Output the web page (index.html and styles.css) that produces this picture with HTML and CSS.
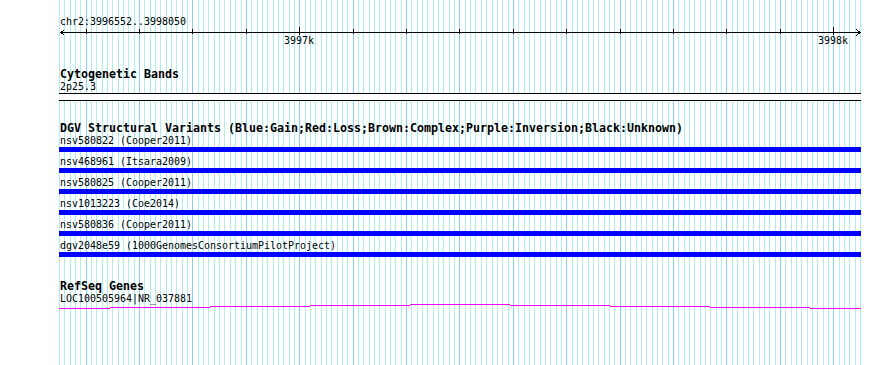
FILE: index.html
```html
<!DOCTYPE html>
<html>
<head>
<meta charset="utf-8">
<title>chr2:3996552..3998050</title>
<link rel="stylesheet" href="styles.css">
</head>
<body>
<div class="panel">
  <svg class="grid" width="890" height="365" viewBox="0 0 890 365" aria-hidden="true">
    <path class="grid-minor" d="M59.5 0V365M64.5 0V365M70.5 0V365M75.5 0V365M80.5 0V365M91.5 0V365M96.5 0V365M102.5 0V365M107.5 0V365M112.5 0V365M118.5 0V365M123.5 0V365M128.5 0V365M134.5 0V365M144.5 0V365M150.5 0V365M155.5 0V365M160.5 0V365M166.5 0V365M171.5 0V365M176.5 0V365M182.5 0V365M187.5 0V365M198.5 0V365M203.5 0V365M208.5 0V365M214.5 0V365M219.5 0V365M224.5 0V365M230.5 0V365M235.5 0V365M241.5 0V365M251.5 0V365M257.5 0V365M262.5 0V365M267.5 0V365M273.5 0V365M278.5 0V365M283.5 0V365M289.5 0V365M294.5 0V365M305.5 0V365M310.5 0V365M315.5 0V365M321.5 0V365M326.5 0V365M331.5 0V365M337.5 0V365M342.5 0V365M347.5 0V365M358.5 0V365M363.5 0V365M369.5 0V365M374.5 0V365M379.5 0V365M385.5 0V365M390.5 0V365M395.5 0V365M401.5 0V365M411.5 0V365M417.5 0V365M422.5 0V365M427.5 0V365M433.5 0V365M438.5 0V365M443.5 0V365M449.5 0V365M454.5 0V365M465.5 0V365M470.5 0V365M475.5 0V365M481.5 0V365M486.5 0V365M492.5 0V365M497.5 0V365M502.5 0V365M508.5 0V365M518.5 0V365M524.5 0V365M529.5 0V365M534.5 0V365M540.5 0V365M545.5 0V365M550.5 0V365M556.5 0V365M561.5 0V365M572.5 0V365M577.5 0V365M582.5 0V365M588.5 0V365M593.5 0V365M598.5 0V365M604.5 0V365M609.5 0V365M614.5 0V365M625.5 0V365M630.5 0V365M636.5 0V365M641.5 0V365M646.5 0V365M652.5 0V365M657.5 0V365M662.5 0V365M668.5 0V365M678.5 0V365M684.5 0V365M689.5 0V365M694.5 0V365M700.5 0V365M705.5 0V365M710.5 0V365M716.5 0V365M721.5 0V365M732.5 0V365M737.5 0V365M743.5 0V365M748.5 0V365M753.5 0V365M759.5 0V365M764.5 0V365M769.5 0V365M775.5 0V365M785.5 0V365M791.5 0V365M796.5 0V365M801.5 0V365M807.5 0V365M812.5 0V365M817.5 0V365M823.5 0V365M828.5 0V365M839.5 0V365M844.5 0V365M849.5 0V365M855.5 0V365M860.5 0V365"/>
    <path class="grid-major" d="M86.5 0V365M139.5 0V365M192.5 0V365M246.5 0V365M299.5 0V365M353.5 0V365M406.5 0V365M459.5 0V365M513.5 0V365M566.5 0V365M620.5 0V365M673.5 0V365M726.5 0V365M780.5 0V365M833.5 0V365"/>
  </svg>

  <div class="tracks">
    <div class="small ruler-label">chr2:3996552..3998050</div>
    <svg class="ruler" width="890" height="40" viewBox="0 0 890 40">
      <path class="ruler-line" d="M60 5.5H860.5"/>
      <path class="ruler-line" d="M64.5 2.5L61 5.5L64.5 8.5"/>
      <path class="ruler-line" d="M856.5 2.5L860 5.5L856.5 8.5"/>
      <path class="ruler-line" d="M86.5 2V7M139.5 2V7M192.5 2V7M246.5 2V7M353.5 2V7M406.5 2V7M459.5 2V7M513.5 2V7M566.5 2V7M620.5 2V7M673.5 2V7M726.5 2V7M780.5 2V7"/>
      <path class="ruler-line" d="M299.5 0V8M833.5 0V8"/>
      <text class="tick-label" x="299" y="17">3997k</text>
      <text class="tick-label" x="833" y="17">3998k</text>
    </svg>

    <section class="track track-cyto">
      <div class="track-title">Cytogenetic Bands</div>
      <div class="small">2p25.3</div>
      <div class="band"></div>
    </section>

    <section class="track track-dgv">
      <div class="track-title">DGV Structural Variants (Blue:Gain;Red:Loss;Brown:Complex;Purple:Inversion;Black:Unknown)</div>
      <div class="feature">
        <div class="small">nsv580822 (Cooper2011)</div>
        <div class="bar bar-gain"></div>
      </div>
      <div class="feature">
        <div class="small">nsv468961 (Itsara2009)</div>
        <div class="bar bar-gain"></div>
      </div>
      <div class="feature">
        <div class="small">nsv580825 (Cooper2011)</div>
        <div class="bar bar-gain"></div>
      </div>
      <div class="feature">
        <div class="small">nsv1013223 (Coe2014)</div>
        <div class="bar bar-gain"></div>
      </div>
      <div class="feature">
        <div class="small">nsv580836 (Cooper2011)</div>
        <div class="bar bar-gain"></div>
      </div>
      <div class="feature">
        <div class="small">dgv2048e59 (1000GenomesConsortiumPilotProject)</div>
        <div class="bar bar-gain"></div>
      </div>
    </section>

    <section class="track track-refseq">
      <div class="track-title">RefSeq Genes</div>
      <div class="small">LOC100505964|NR_037881</div>
      <svg class="gene" width="890" height="5" viewBox="0 0 890 5">
        <g class="intron">
          <rect x="59" y="4" width="51" height="1"/>
          <rect x="110" y="3" width="100" height="1"/>
          <rect x="210" y="2" width="100" height="1"/>
          <rect x="310" y="1" width="100" height="1"/>
          <rect x="410" y="0" width="100" height="1"/>
          <rect x="510" y="1" width="100" height="1"/>
          <rect x="610" y="2" width="100" height="1"/>
          <rect x="710" y="3" width="100" height="1"/>
          <rect x="810" y="4" width="51" height="1"/>
        </g>
      </svg>
    </section>
  </div>
</div>
</body>
</html>
```

FILE: styles.css
```css
html, body {
  margin: 0;
  padding: 0;
  background: #ffffff;
}

body {
  font-family: "DejaVu Sans Mono", "Liberation Mono", monospace;
  color: #000000;
}

.panel {
  position: relative;
  width: 890px;
  height: 365px;
  overflow: hidden;
}

.grid {
  position: absolute;
  left: 0;
  top: 0;
  shape-rendering: crispEdges;
}

.grid-minor {
  stroke: #afeeee;
  stroke-width: 1;
  fill: none;
}

.grid-major {
  stroke: #87cefa;
  stroke-width: 1;
  fill: none;
}

.tracks {
  position: relative;
  padding-top: 16px;
}

.small {
  font-size: 9.97px;
  line-height: 11px;
  height: 11px;
  padding-left: 60px;
  white-space: nowrap;
}

.track-title {
  font-size: 11.63px;
  font-weight: bold;
  line-height: 14px;
  height: 14px;
  padding-left: 60px;
  white-space: nowrap;
}

.ruler {
  display: block;
  shape-rendering: crispEdges;
}

.ruler-line {
  stroke: #000000;
  stroke-width: 1;
  fill: none;
}

.tick-label {
  font-family: "DejaVu Sans Mono", "Liberation Mono", monospace;
  font-size: 9.97px;
  text-anchor: middle;
  fill: #000000;
}

.band {
  margin: 1px 0 0 59px;
  width: 802px;
  height: 6px;
  border-top: 1px solid #000000;
  border-bottom: 1px solid #000000;
  background: #ffffff;
}

.track-dgv {
  margin-top: 20px;
}

.feature {
  height: 21px;
}

.bar {
  margin: 1px 0 0 59px;
  width: 802px;
  height: 5px;
}

.bar-gain {
  background: #0000ff;
}

.track-refseq {
  margin-top: 18px;
}

.gene {
  display: block;
  shape-rendering: crispEdges;
}

.intron {
  fill: #ff00ff;
}
```
